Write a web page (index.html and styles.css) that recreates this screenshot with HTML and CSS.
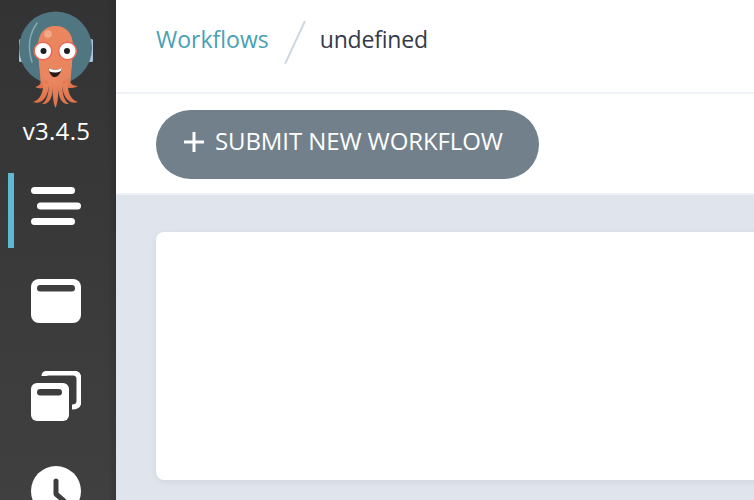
FILE: index.html
```html
<!DOCTYPE html>
<html lang="en">
<head>
<meta charset="utf-8">
<title>Workflows</title>
<link rel="stylesheet" href="styles.css">
</head>
<body>
<div class="app">
  <aside class="sidebar">
    <div class="logo">
      <svg width="116" height="110" viewBox="0 0 116 110">
        <defs>
          <linearGradient id="legs" x1="0" y1="0" x2="0" y2="1">
            <stop offset="0" stop-color="#ea865f"/>
            <stop offset="1" stop-color="#dd7148"/>
          </linearGradient>
        </defs>
        <rect x="19" y="39" width="4.500" height="23" rx="1.500" fill="#a9c4de"/>
        <rect x="88.500" y="39" width="4.500" height="23" rx="1.500" fill="#a9c4de"/>
        <circle cx="55.500" cy="48" r="36.500" fill="#4f7681"/>
        <path d="M37 23 Q25 40 32 62" fill="none" stroke="#86abb0" stroke-width="1.500" stroke-linecap="round"/>
        <path d="M38 46 C38 33 45 26 55.500 26 C66 26 73 33 73 46 C73 58 71 72 70 86 H41 C40 72 38 58 38 46 Z" fill="#ea865f"/>
        <g fill="url(#legs)">
          <path d="M42 76 C42 83 40 86 35 87 C41 90 47 88 49 82 Z"/>
          <path d="M69 76 C69 83 72 86 78 86 C71 90 64 88 62 82 Z"/>
          <path d="M43 82 C44 92 40 100 33 102 C41 105 48 98 49 85 Z"/>
          <path d="M68 82 C67 92 71 100 78 102 C70 105 63 98 62 85 Z"/>
          <path d="M48.500 82 C49.500 92 47 101 42 104 C50 105 53 96 53 85 Z"/>
          <path d="M62.500 82 C61.500 92 64 101 69 104 C61 105 58 96 58 85 Z"/>
          <path d="M52 82 C53 92 52.500 102 55.500 108 C58.500 102 58 92 59 82 Z"/>
        </g>
        <circle cx="48" cy="34" r="3.800" fill="#f3a98b"/>
        <circle cx="43" cy="51" r="8.800" fill="#fff" stroke="#ee6a55" stroke-width="1.500"/>
        <circle cx="67.500" cy="51" r="8.800" fill="#fff" stroke="#ee6a55" stroke-width="1.500"/>
        <circle cx="43.500" cy="51" r="3" fill="#1e1e1e"/>
        <circle cx="67" cy="51" r="3" fill="#1e1e1e"/>
        <path d="M48.500 68 C53 70.500 58 70.500 62 67.500 C61 74 57 77.500 54 77 C51 76.500 49 72.500 48.500 68 Z" fill="#2a1a16"/>
        <path d="M48.500 68 C53 70.500 58 70.500 62 67.500 L61 71 C57 73 53 73 49.500 71.500 Z" fill="#fff"/>
      </svg>
      <span class="version">v3.4.5</span>
    </div>
    <nav class="nav">
      <a class="nav-item active">
        <svg width="50" height="38" viewBox="0 0 50 38">
          <rect x="0" y="0" width="44" height="7" rx="3.500" fill="#fff"/>
          <rect x="6" y="15.500" width="44" height="7" rx="3.500" fill="#fff"/>
          <rect x="0" y="31" width="44" height="7" rx="3.500" fill="#fff"/>
        </svg>
      </a>
      <a class="nav-item">
        <svg width="50" height="44" viewBox="0 0 50 44">
          <rect width="50" height="44" rx="8" fill="#fff"/>
          <rect x="6" y="6" width="38" height="6.500" rx="3.250" fill="#3e3e3e"/>
        </svg>
      </a>
      <a class="nav-item">
        <svg width="50" height="50" viewBox="0 0 50 50">
          <path d="M13 5 Q13 2 18 2 H42 Q48 2 48 8 V30 Q48 36 41 36" fill="none" stroke="#fff" stroke-width="5"/>
          <rect x="0" y="12" width="38" height="38" rx="6" fill="#fff"/>
          <rect x="6" y="18" width="25" height="6.500" rx="3.250" fill="#3e3e3e"/>
        </svg>
      </a>
      <a class="nav-item">
        <svg width="50" height="50" viewBox="0 0 50 50">
          <circle cx="25" cy="25" r="25" fill="#fff"/>
          <path d="M25 15 V28 L33 35" fill="none" stroke="#3e3e3e" stroke-width="5" stroke-linecap="round" stroke-linejoin="round"/>
        </svg>
      </a>
    </nav>
  </aside>
  <main class="main">
    <header class="topbar">
      <a class="crumb-link">Workflows</a>
      <span class="crumb-sep"></span>
      <span class="crumb-current">undefined</span>
    </header>
    <div class="actions">
      <button class="submit-btn">
        <svg width="20" height="20" viewBox="0 0 20 20"><path d="M10 0 V20 M0 10 H20" stroke="#fff" stroke-width="3"/></svg>
        <span>SUBMIT NEW WORKFLOW</span>
      </button>
    </div>
    <section class="content">
      <div class="card"></div>
    </section>
  </main>
</div>
</body>
</html>
```
FILE: styles.css
```css
* { box-sizing: border-box; }
html, body {
  margin: 0;
  height: 100%;
  overflow: hidden;
  font-family: "Open Sans", "Noto Sans", sans-serif;
}
.app {
  display: flex;
  width: 754px;
  height: 500px;
  overflow: hidden;
}
.sidebar {
  flex: 0 0 116px;
  height: 500px;
  overflow: hidden;
  background:
    linear-gradient(to right, rgba(0, 0, 0, 0) 92%, rgba(0, 0, 0, 0.12) 100%),
    linear-gradient(#333, #404040);
}
.logo {
  display: flex;
  flex-direction: column;
  align-items: center;
  height: 173px;
}
.logo svg { display: block; }
.version {
  color: #fff;
  font-size: 24px;
  letter-spacing: 0.3px;
  line-height: 32px;
  margin-top: 5px;
  margin-left: -3px;
}
.nav {
  display: flex;
  flex-direction: column;
}
.nav-item {
  display: flex;
  align-items: center;
  flex: 0 0 75px;
  height: 75px;
  margin: 0 0 20px 8px;
  padding: 0 0 9px 17px;
  border-left: 6px solid transparent;
}
.nav-item.active { border-left-color: #5fb9d2; }
.main {
  flex: 1;
  min-width: 0;
  display: flex;
  flex-direction: column;
  height: 500px;
}
.topbar {
  flex: 0 0 94px;
  display: flex;
  align-items: center;
  padding: 0 0 14px 40px;
  background: #fff;
  border-bottom: 2px solid #eef1f5;
  font-size: 23px;
}
.crumb-link { color: #4a9fb5; }
.crumb-current { color: #343a4a; letter-spacing: -0.2px; }
.crumb-sep {
  width: 2px;
  height: 47px;
  background: #ccd6e0;
  transform: rotate(25deg);
  margin: 6px 24px 0 25px;
}
.actions {
  flex: 0 0 101px;
  padding: 16px 0 0 40px;
  background: #fff;
  border-bottom: 2px solid #eef1f5;
}
.submit-btn {
  display: flex;
  align-items: center;
  gap: 11px;
  height: 69px;
  width: 383px;
  padding: 0 0 8px 28px;
  border: none;
  border-radius: 35px;
  background: #72808b;
  color: #fff;
  font: 400 24px "Open Sans", "Noto Sans", sans-serif;
  letter-spacing: -0.1px;
  white-space: nowrap;
}
.submit-btn svg { margin-top: 3px; }
.content {
  flex: 1;
  padding: 37px 0 0 40px;
  background: #e0e5ed;
}
.card {
  width: 700px;
  height: 248px;
  background: #fff;
  border-radius: 8px;
  box-shadow: 0 2px 6px rgba(100, 110, 130, 0.12);
}
```
